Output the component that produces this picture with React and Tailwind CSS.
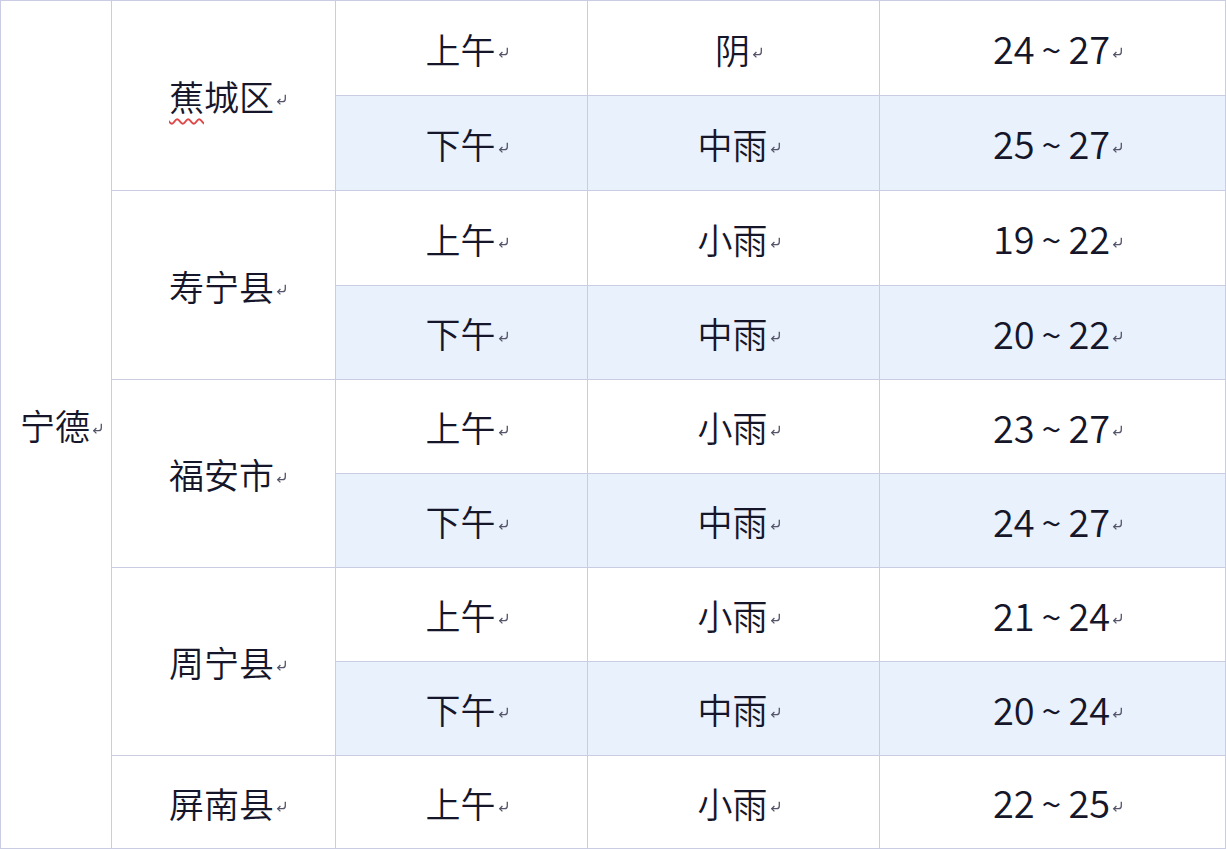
import React from 'react';

const rows = [
  { county: '蕉城区', span: 2, time: '上午', weather: '阴', temp: ['24', '27'], wavy: true },
  { time: '下午', weather: '中雨', temp: ['25', '27'] },
  { county: '寿宁县', span: 2, time: '上午', weather: '小雨', temp: ['19', '22'] },
  { time: '下午', weather: '中雨', temp: ['20', '22'] },
  { county: '福安市', span: 2, time: '上午', weather: '小雨', temp: ['23', '27'] },
  { time: '下午', weather: '中雨', temp: ['24', '27'] },
  { county: '周宁县', span: 2, time: '上午', weather: '小雨', temp: ['21', '24'] },
  { time: '下午', weather: '中雨', temp: ['20', '24'] },
  { county: '屏南县', span: 1, time: '上午', weather: '小雨', temp: ['22', '25'] },
];

const heights = [95, 95, 95, 94, 94, 94, 94, 94, 93];

function Mark() {
  return (
    <svg width="13" height="13" viewBox="0 0 12 12" className="inline-block ml-[1px] align-middle mt-[8px]">
      <path d="M9.5 1.5 V5.5 Q9.5 8 7 8 H2.5" fill="none" stroke="#55556a" strokeWidth="1.2" />
      <path d="M5 5.5 L2.5 8 L5 10.5" fill="none" stroke="#55556a" strokeWidth="1.2" />
    </svg>
  );
}

function Text({ children }) {
  return (
    <span className="inline-flex items-center whitespace-nowrap">
      {children}
      <Mark />
    </span>
  );
}

export default function App() {
  const cell = 'border border-[#c9cce3] text-center align-middle p-0';
  return (
    <div className="w-[1226px] h-[850px] bg-white overflow-hidden" style={{ fontFamily: '"Noto Sans CJK SC", "Noto Sans", sans-serif' }}>
      <table className="border-collapse table-fixed w-[1225px] text-[35px] text-[#16162a] leading-none font-[350]">
        <colgroup>
          <col className="w-[111px]" />
          <col className="w-[224px]" />
          <col className="w-[252px]" />
          <col className="w-[292px]" />
          <col className="w-[346px]" />
        </colgroup>
        <tbody>
          {rows.map((r, i) => {
            const shade = r.time === '下午' ? 'bg-[#e9f1fd]' : 'bg-white';
            return (
              <tr key={i} style={{ height: heights[i] }}>
                {i === 0 && (
                  <td rowSpan={9} className={`${cell} bg-white pl-[12px]`}>
                    <Text>宁德</Text>
                  </td>
                )}
                {r.county && (
                  <td rowSpan={r.span} className={`${cell} bg-white pl-[10px]`}>
                    <Text>
                      {r.wavy ? (
                        <>
                          <span className="underline decoration-wavy decoration-[#e04848] decoration-[1.5px] underline-offset-[7px]">蕉</span>
                          城区
                        </>
                      ) : (
                        r.county
                      )}
                    </Text>
                  </td>
                )}
                <td className={`${cell} ${shade} pl-[12px]`}>
                  <Text>{r.time}</Text>
                </td>
                <td className={`${cell} ${shade} pl-[12px]`}>
                  <Text>{r.weather}</Text>
                </td>
                <td className={`${cell} ${shade} pl-[12px]`}>
                  <Text>
                    <span className="text-[38px]">{r.temp[0]}</span>
                    <span className="mx-[7px] text-[36px]">~</span>
                    <span className="text-[38px]">{r.temp[1]}</span>
                  </Text>
                </td>
              </tr>
            );
          })}
        </tbody>
      </table>
    </div>
  );
}
